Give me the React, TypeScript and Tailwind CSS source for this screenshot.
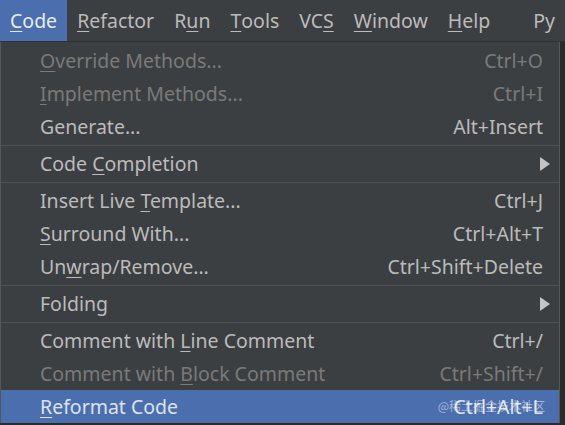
import React from "react";

type Item =
  | { sep: true }
  | {
      sep?: false;
      label: string;
      mn: number;
      shortcut?: string;
      disabled?: boolean;
      sub?: boolean;
      active?: boolean;
    };

const items: Item[] = [
  { label: "Override Methods...", mn: 0, shortcut: "Ctrl+O", disabled: true },
  { label: "Implement Methods...", mn: 0, shortcut: "Ctrl+I", disabled: true },
  { label: "Generate...", mn: -1, shortcut: "Alt+Insert" },
  { sep: true },
  { label: "Code Completion", mn: 5, sub: true },
  { sep: true },
  { label: "Insert Live Template...", mn: 12, shortcut: "Ctrl+J" },
  { label: "Surround With...", mn: 0, shortcut: "Ctrl+Alt+T" },
  { label: "Unwrap/Remove...", mn: 2, shortcut: "Ctrl+Shift+Delete" },
  { sep: true },
  { label: "Folding", mn: -1, sub: true },
  { sep: true },
  { label: "Comment with Line Comment", mn: 13, shortcut: "Ctrl+/" },
  { label: "Comment with Block Comment", mn: 13, shortcut: "Ctrl+Shift+/", disabled: true },
  { label: "Reformat Code", mn: 0, shortcut: "Ctrl+Alt+L", active: true },
];

const menus = [
  { label: "Code", mn: 0, active: true },
  { label: "Refactor", mn: 0 },
  { label: "Run", mn: 1 },
  { label: "Tools", mn: 0 },
  { label: "VCS", mn: 2 },
  { label: "Window", mn: 0 },
  { label: "Help", mn: 0 },
];

function Mnemonic({ text, at }: { text: string; at: number }) {
  if (at < 0) return <>{text}</>;
  return (
    <>
      {text.slice(0, at)}
      <span className="underline underline-offset-[3px] decoration-1">{text[at]}</span>
      {text.slice(at + 1)}
    </>
  );
}

export default function App() {
  return (
    <div
      className="w-[565px] h-[425px] overflow-hidden bg-[#2b2b2b] antialiased"
      style={{ fontFamily: '"Noto Sans", "Open Sans", sans-serif' }}
    >
      {/* menu bar */}
      <div className="h-[42px] bg-[#3c3f41] flex items-stretch border-b border-[#323232] text-[19.5px] text-[#bbbbbb]">
        {menus.map((m) => (
          <div
            key={m.label}
            className={`flex items-center px-[10px] ${m.active ? "bg-[#4b6eaf] text-[#e8ecf2]" : ""}`}
          >
            <Mnemonic text={m.label} at={m.mn} />
          </div>
        ))}
        <div className="flex items-center pl-[33px]">Py</div>
      </div>

      {/* dropdown */}
      <div className="relative w-[560px] bg-[#3c3f41] border-l border-r border-[#555759] pt-[2px] text-[19.5px]">
        {items.map((it, i) =>
          it.sep ? (
            <div key={i} className="h-[4px] flex items-center">
              <div className="h-[1px] w-full bg-[#515151]" />
            </div>
          ) : (
            <div
              key={i}
              className={`h-[33px] flex items-center justify-between pl-[39px] pr-[16px] ${
                it.active ? "bg-[#4b6eaf] text-[#dce3ef]" : it.disabled ? "text-[#7a7a7a]" : "text-[#bbbbbb]"
              }`}
            >
              <span>
                <Mnemonic text={it.label} at={it.mn} />
              </span>
              {it.sub ? (
                <svg width="12" height="14" viewBox="0 0 12 14" className="mr-[-8px]">
                  <path d="M1 0 L11 7 L1 14 Z" fill="#c4c4c4" />
                </svg>
              ) : (
                <span>{it.shortcut}</span>
              )}
            </div>
          )
        )}
        <div
          className="absolute right-[14px] bottom-[8px] text-[12px] text-white/50 pointer-events-none"
          style={{ fontFamily: '"Noto Sans CJK SC", sans-serif' }}
        >
          @稀土掘金技术社区
        </div>
      </div>
    </div>
  );
}
